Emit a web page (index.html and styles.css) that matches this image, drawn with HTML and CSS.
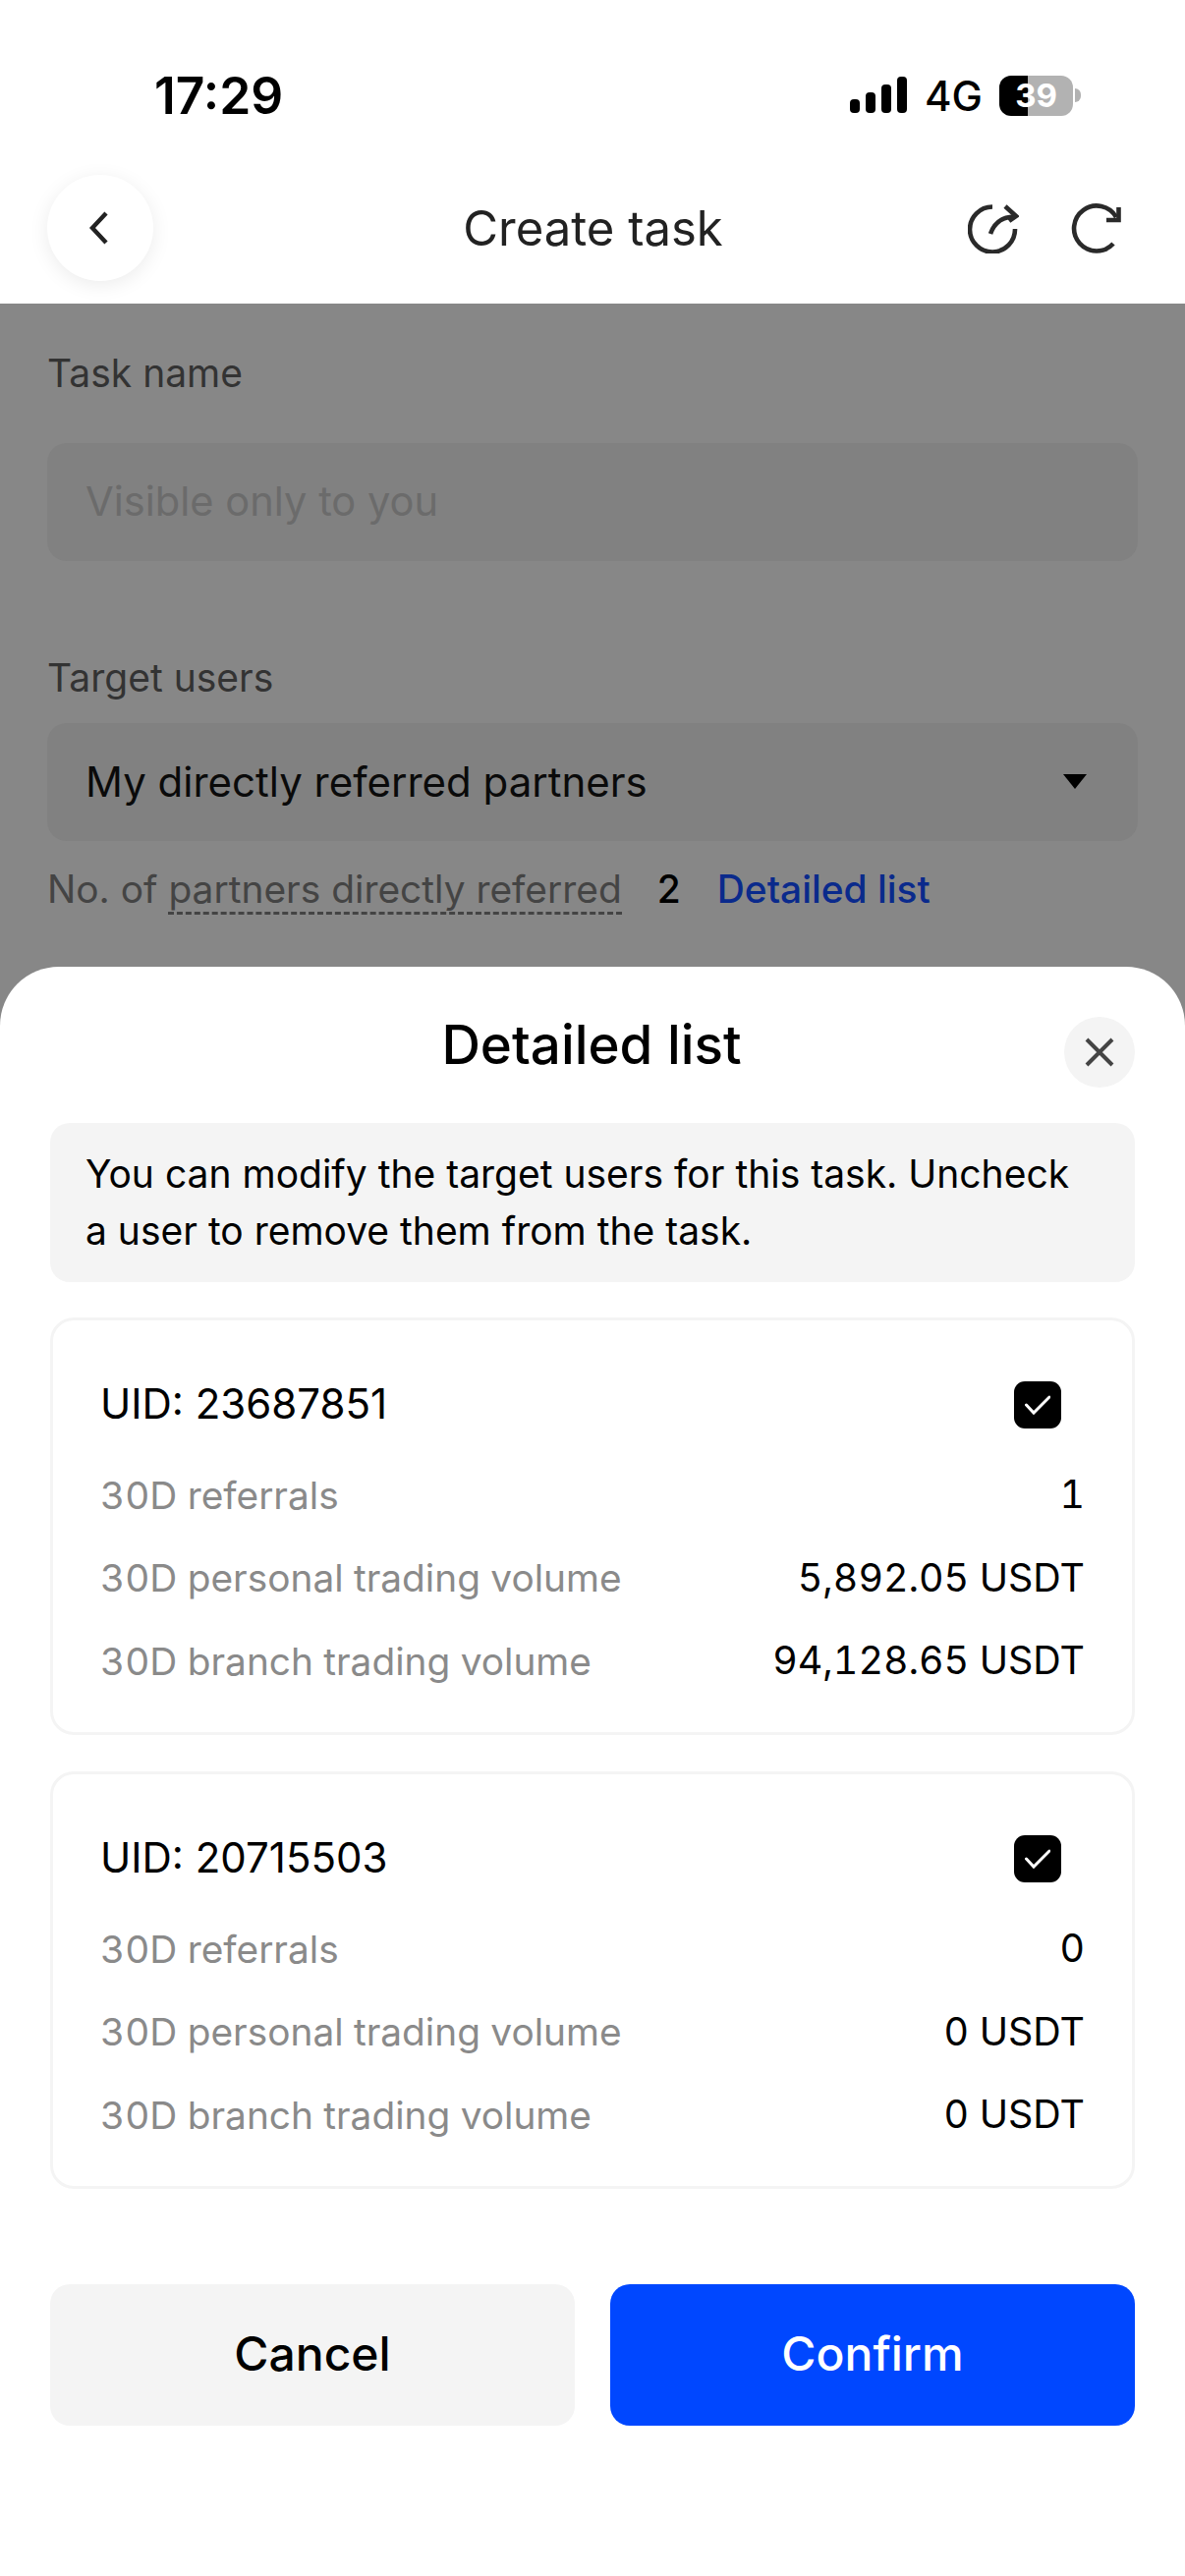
FILE: index.html
```html
<!DOCTYPE html>
<html lang="en">
<head>
  <meta charset="UTF-8">
  <meta name="viewport" content="width=device-width, initial-scale=1">
  <title>Create task</title>
  <link rel="stylesheet" href="styles.css">
</head>
<body>
  <div class="screen">

    <div class="status-bar">
      <span class="time">17:29</span>
      <div class="status-right">
        <svg class="signal" width="58" height="38" viewBox="0 0 58 38">
          <rect x="0" y="23" width="10" height="14" rx="4"/>
          <rect x="16" y="16" width="10" height="21" rx="4"/>
          <rect x="32" y="8" width="10" height="29" rx="4"/>
          <rect x="48" y="0" width="10" height="37" rx="4"/>
        </svg>
        <span class="network">4G</span>
        <div class="battery"><span>39</span></div>
        <div class="battery-cap"></div>
      </div>
    </div>

    <div class="nav">
      <button class="back-btn">
        <svg width="28" height="40" viewBox="0 0 28 40" fill="none" stroke="#222" stroke-width="4.4">
          <path d="M20 5 6 20l14 15"/>
        </svg>
      </button>
      <div class="nav-title">Create task</div>
      <div class="nav-icons">
        <svg width="52" height="52" viewBox="0 0 52 52" fill="none" stroke="#2a2a2a" stroke-width="4.6">
          <path d="M25 4.5A23 23 0 1 0 48 27"/>
          <path d="M23 32C26 23 33 15 47 14.5"/>
          <path d="M38 4 49 14 42 19"/>
        </svg>
        <svg width="52" height="52" viewBox="0 0 52 52" fill="none" stroke="#2a2a2a" stroke-width="4.6">
          <path d="M47 15A23 23 0 1 0 44 42"/>
          <path d="M49.5 5V18H37"/>
        </svg>
      </div>
    </div>

    <div class="form">
      <div class="field-label">Task name</div>
      <div class="input placeholder">Visible only to you</div>

      <div class="field-label target-label">Target users</div>
      <div class="input select">
        <span>My directly referred partners</span>
        <span class="caret"></span>
      </div>
      <div class="partners-row">
        <span class="muted">No. of <span class="dotted">partners directly referred</span></span>
        <span class="count">2</span>
        <span class="link">Detailed list</span>
      </div>
    </div>

    <div class="sheet">
      <div class="sheet-head">
        <div class="sheet-title">Detailed list</div>
        <button class="close-btn">
          <svg width="30" height="30" viewBox="0 0 30 30" fill="none" stroke="#444" stroke-width="4">
            <path d="M2 2 28 28M28 2 2 28"/>
          </svg>
        </button>
      </div>

      <div class="notice">You can modify the target users for this task. Uncheck a user to remove them from the task.</div>

      <div class="card">
        <div class="card-head">
          <span>UID: 23687851</span>
          <span class="checkbox">
            <svg width="26" height="22" viewBox="0 0 26 22" fill="none" stroke="#fff" stroke-width="3" stroke-linecap="round">
              <path d="M1.5 11 9 19 25 3"/>
            </svg>
          </span>
        </div>
        <div class="row"><span class="row-label">30D referrals</span><span>1</span></div>
        <div class="row"><span class="row-label">30D personal trading volume</span><span>5,892.05 USDT</span></div>
        <div class="row"><span class="row-label">30D branch trading volume</span><span>94,128.65 USDT</span></div>
      </div>

      <div class="card">
        <div class="card-head">
          <span>UID: 20715503</span>
          <span class="checkbox">
            <svg width="26" height="22" viewBox="0 0 26 22" fill="none" stroke="#fff" stroke-width="3" stroke-linecap="round">
              <path d="M1.5 11 9 19 25 3"/>
            </svg>
          </span>
        </div>
        <div class="row"><span class="row-label">30D referrals</span><span>0</span></div>
        <div class="row"><span class="row-label">30D personal trading volume</span><span>0 USDT</span></div>
        <div class="row"><span class="row-label">30D branch trading volume</span><span>0 USDT</span></div>
      </div>

      <div class="actions">
        <button class="btn btn-cancel">Cancel</button>
        <button class="btn btn-confirm">Confirm</button>
      </div>
    </div>

  </div>
</body>
</html>
```

FILE: styles.css
```css
* {
  box-sizing: border-box;
}
body {
  margin: 0;
  font-family: Inter, "Liberation Sans", sans-serif;
  background-color: #fff;
  color: #000;
}
button {
  font-family: inherit;
  border: none;
  padding: 0;
}
.screen {
  position: relative;
  width: 1206px;
  height: 2622px;
  overflow: hidden;
}

/* status bar */
.status-bar {
  height: 155px;
  padding: 39px 106px 0 157px;
  display: flex;
  justify-content: space-between;
  align-items: center;
}
.time {
  font-size: 51.5px;
  font-weight: 600;
}
.status-right {
  display: flex;
  align-items: center;
}
.signal {
  fill: #000;
}
.network {
  margin-left: 18px;
  font-size: 42px;
  font-weight: 500;
}
.battery {
  width: 75px;
  height: 41px;
  margin-left: 17px;
  border-radius: 12px;
  background: linear-gradient(to right, #000 29px, #b2b2b2 29px);
  color: #fff;
  font-size: 33px;
  font-weight: 700;
  line-height: 41px;
  text-align: center;
}
.battery-cap {
  width: 6px;
  height: 14px;
  margin-left: 2px;
  border-radius: 0 7px 7px 0;
  background: #b2b2b2;
}

/* top nav */
.nav {
  height: 154px;
  padding: 0 65px 0 48px;
  display: flex;
  align-items: center;
}
.back-btn {
  width: 108px;
  height: 108px;
  border-radius: 50%;
  background: #fff;
  box-shadow: 0 4px 20px rgba(0, 0, 0, 0.08);
  display: flex;
  align-items: center;
  justify-content: center;
}
.nav-title {
  flex: 1;
  text-align: center;
  font-size: 49px;
  color: #222;
  padding-left: 66px;
}
.nav-icons {
  display: flex;
  gap: 52px;
}

/* dimmed form behind the sheet */
.form {
  height: 2313px;
  padding: 46px 48px 0;
  background-color: #878787;
}
.field-label {
  font-size: 39px;
  line-height: 50px;
  color: #333;
}
.target-label {
  margin-top: 94px;
}
.input {
  height: 120px;
  margin-top: 46px;
  padding: 0 39px 2px;
  border-radius: 20px;
  background-color: #818181;
  display: flex;
  align-items: center;
  font-size: 42px;
}
.placeholder {
  font-size: 41.6px;
  color: #6b6b6b;
}
.select {
  margin-top: 21px;
  justify-content: space-between;
  color: #0a0a0a;
}
.caret {
  width: 0;
  height: 0;
  margin-right: 13px;
  border-left: 12px solid transparent;
  border-right: 12px solid transparent;
  border-top: 15px solid #000;
}
.partners-row {
  margin-top: 24px;
  display: flex;
  align-items: center;
  font-size: 38.9px;
  line-height: 50px;
}
.muted {
  color: #444;
}
.dotted {
  border-bottom: 3px dashed #444;
}
.count {
  margin-left: 36px;
  color: #000;
  font-weight: 500;
}
.link {
  margin-left: 37px;
  color: #0a2a8c;
  font-weight: 500;
}

/* bottom sheet */
.sheet {
  position: absolute;
  left: 0;
  right: 0;
  bottom: 0;
  height: 1638px;
  padding: 0 51px;
  border-radius: 60px 60px 0 0;
  background-color: #fff;
}
.sheet-head {
  height: 159px;
  display: flex;
  align-items: flex-start;
  position: relative;
}
.sheet-title {
  flex: 1;
  padding-right: 2px;
  text-align: center;
  font-size: 54.7px;
  font-weight: 500;
  line-height: 158px;
}
.close-btn {
  position: absolute;
  right: 0;
  top: 51px;
  width: 72px;
  height: 72px;
  border-radius: 50%;
  background-color: #f4f4f4;
  display: flex;
  align-items: center;
  justify-content: center;
}
.notice {
  height: 162px;
  padding: 23px 36px;
  border-radius: 20px;
  background-color: #f4f4f4;
  font-size: 39px;
  line-height: 58px;
}
.card {
  height: 425px;
  margin-top: 36px;
  padding: 51px 48px 0;
  border: 3px solid #f4f4f4;
  border-radius: 24px;
}
.card + .card {
  margin-top: 37px;
}
.card-head {
  height: 66px;
  margin-bottom: 18px;
  padding-right: 24px;
  display: flex;
  justify-content: space-between;
  align-items: center;
  font-size: 42px;
}
.checkbox {
  width: 48px;
  height: 48px;
  margin-top: 4px;
  border-radius: 11px;
  background-color: #000;
  display: flex;
  align-items: center;
  justify-content: center;
}
.row {
  height: 84.5px;
  display: flex;
  justify-content: space-between;
  align-items: center;
  font-size: 39.4px;
  font-variant-numeric: tabular-nums;
}
.row-label {
  font-size: 38.8px;
  color: #8a8a8a;
}
.actions {
  margin-top: 97px;
  display: flex;
  gap: 36px;
}
.btn {
  flex: 1;
  height: 144px;
  padding-bottom: 3px;
  border-radius: 20px;
  font-size: 48px;
  font-weight: 500;
}
.btn-cancel {
  background-color: #f4f4f4;
  color: #000;
}
.btn-confirm {
  background-color: #0047ff;
  color: #fff;
}
```
